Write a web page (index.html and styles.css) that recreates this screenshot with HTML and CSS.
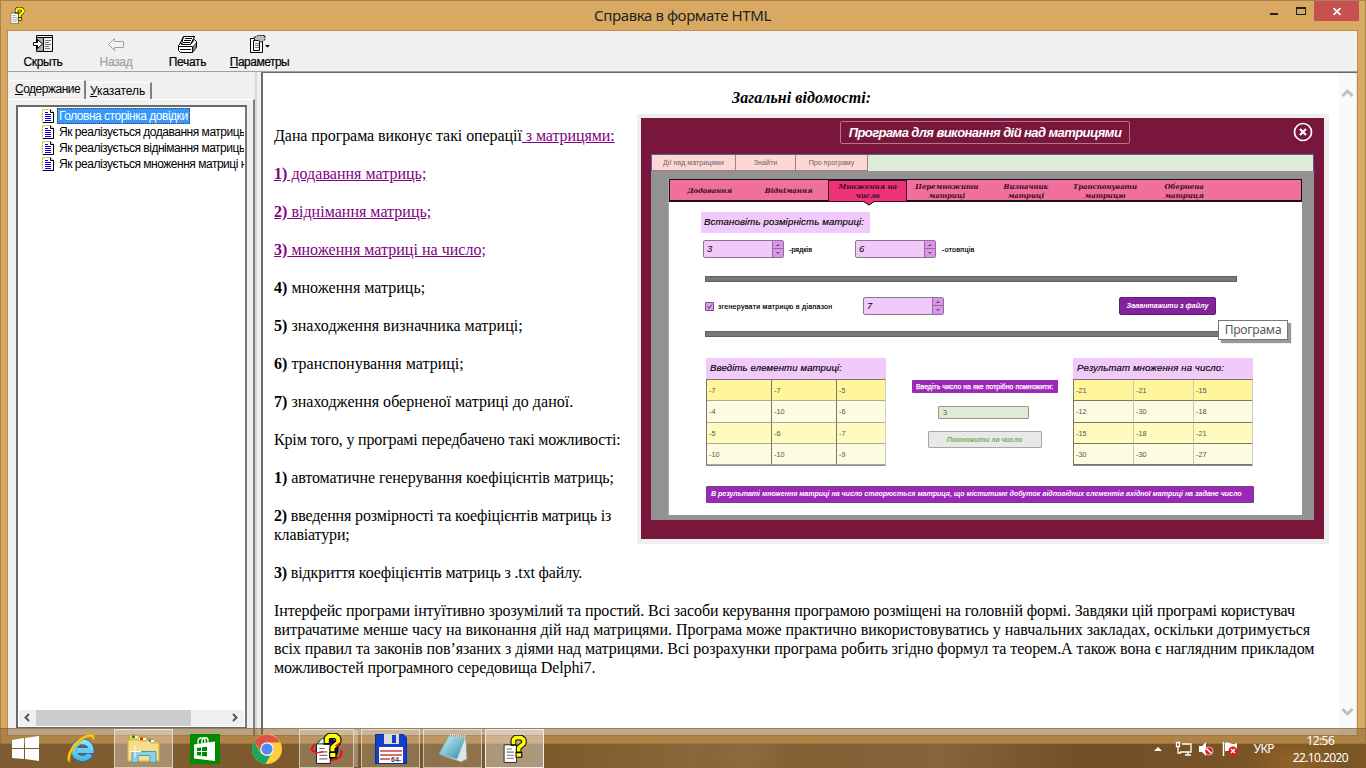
FILE: index.html
```html
<!DOCTYPE html>
<html lang="uk">
<head>
<meta charset="utf-8">
<title>Справка в формате HTML</title>
<link rel="stylesheet" href="styles.css">
</head>
<body>
<svg class="defs" width="0" height="0">
  <symbol id="help" viewBox="0 0 22 27">
    <path d="M.5 9.500h12v17H.5z" fill="#fff" stroke="#111" stroke-width=".8"/>
    <path d="M3 13.500h5M3 16.500h7M3 19.500h7M3 22.500h7" stroke="#777"/>
    <g fill="none" stroke-linejoin="bevel"><path d="M9.500 7.500V4.500L11.500 2.500H17L19.500 4.500V8L14.500 12.500V14.500" stroke="#000" stroke-width="5.500" stroke-linecap="square"/><path d="M9.500 7V4.500L11.500 2.500H17L19.500 4.500V8L14.500 12.500V14" stroke="#ff0" stroke-width="3.600" stroke-linecap="square"/></g>
    <path d="M12 17h5.500v4.500H12z" fill="#ff0" stroke="#000"/>
  </symbol>
  <symbol id="page" viewBox="0 0 12 14">
    <path d="M.5.5h8l3 3v10H.5z" fill="#fff" stroke="#999"/>
    <path d="M.5 13V.5H8" fill="none" stroke="#ee3" stroke-dasharray="2 1"/>
    <path d="M8.500.5v3h3v10H1" fill="none" stroke="#000"/>
    <path d="M3 3.500h3M3 5.500h6M3 7.500h6M3 9.500h6M3 11.500h6" stroke="#00f"/>
  </symbol>
</svg>
<div class="desktop">
  <div class="window">
    <header class="titlebar">
      <svg class="title-icon" width="15" height="17" viewBox="0 0 22 27"><use href="#help"/></svg>
      <span class="title">Справка в формате HTML</span>
      <div class="controls">
        <i class="min"></i><i class="max"></i>
        <span class="close"><svg width="8" height="7" viewBox="0 0 8 7"><path d="M.5 0l7 7M7.500 0l-7 7" stroke="#fff" stroke-width="1.700"/></svg></span>
      </div>
    </header>
    <div class="client">
      <nav class="toolbar">
        <div class="tool t1"><svg width="20" height="18" viewBox="0 0 20 18"><path d="M3.500.5h16v16h-16z" fill="#eee" stroke="#000"/><path d="M4 2.500h15" stroke="#000"/><path d="M4 3h6v13H4z" fill="#aaa"/><path d="M10.500 3v13" stroke="#000"/><path d="M12 5.500h6M12 7.500h4M12 9.500h6M12 11.500h4M12 13.500h5" stroke="#777"/><path d="M.5 7.500h4v-3l5 4.500-5 4.500v-3h-4z" fill="#fff" stroke="#000"/><path d="M3 17h1" stroke="#0f0"/></svg><span>Скрыть</span></div>
        <div class="tool t2 off"><svg width="18" height="18" viewBox="0 0 18 18"><path d="M1.500 9.500l6-6v3h9v6h-9v3z" fill="#f4f4f4" stroke="#a0a0a0"/></svg><span>Назад</span></div>
        <div class="tool t3"><svg width="21" height="18" viewBox="0 0 21 18"><path d="M6.500 1.500h11l-4 8h-11z" fill="#fff" stroke="#000"/><path d="M8 3.500h7M7 5.500h7M6 7.500h7" stroke="#000"/><path d="M1.500 10.500l2-2h11l3-4 2 2v6l-4 5h-12l-2-2z" fill="#fff" stroke="#000"/><path d="M6.500 1.500h11l-4 8h-9z" fill="#fff" stroke="#000"/><path d="M8 3.500h7M7 5.500h7M6 7.500h7M1 11.500h14.500v6M3 14.500h11" fill="none" stroke="#000"/><path d="M16 11l3-4v6l-3 3z" fill="#777"/></svg><span>Печать</span></div>
        <div class="tool t4"><svg width="21" height="18" viewBox="0 0 21 18"><path d="M1.500 3.500h12v14h-12z" fill="#fff" stroke="#000"/><path d="M4.500 5.500h6v10h-6z" fill="#fff" stroke="#000"/><path d="M6 8.500h4M6 10.500h4M6 12.500h4" stroke="#777"/><path d="M5 2.500l4-2h7v4l-4 3-2-2H6z" fill="#bbb" stroke="#000" stroke-dasharray="2 1"/><path d="M16 10h5l-2.500 2.500z"/></svg><span><u>П</u>араметры</span></div>
      </nav>
      <div class="panes">
        <aside class="side">
          <div class="tabs"><span class="tab on"><u>С</u>одержание</span><span class="tab two"><u>У</u>казатель</span></div>
          <div class="tabbody">
            <div class="tree">
              <div class="node sel"><svg width="12" height="14"><use href="#page"/></svg><span>Головна сторінка довідки</span></div>
              <div class="node"><svg width="12" height="14"><use href="#page"/></svg><span>Як реалізується додавання матриць</span></div>
              <div class="node"><svg width="12" height="14"><use href="#page"/></svg><span>Як реалізується віднімання матриць</span></div>
              <div class="node"><svg width="12" height="14"><use href="#page"/></svg><span>Як реалізується множення матриці н</span></div>
              <div class="hscroll"><svg width="17" height="15"><path d="M10 4L6.500 7.500 10 11" class="chev"/></svg><i></i><svg width="17" height="15"><path d="M6 4l3.500 3.500L6 11" class="chev"/></svg></div>
            </div>
          </div>
        </aside>
        <div class="splitter"></div>
        <main class="doc">
          <article class="article">
            <h1>Загальні відомості:</h1>
            <figure class="shot">
              <div class="app">
                <div class="app-head"><b>Програма для виконання дій над матрицями</b>
                  <svg class="app-close" width="20" height="20" viewBox="0 0 20 20" fill="none" stroke="#fff"><circle cx="10" cy="10" r="8.500" stroke-width="1.700"/><path d="M7 7l6 6M13 7l-6 6" stroke-width="2.200"/></svg></div>
                <div class="app-menu"><span>Дії над матрицями</span><span>Знайти</span><span>Про програму</span></div>
                <div class="frame"><div class="panel">
                  <div class="ops"><span>Додавання</span><span>Віднімання</span><span class="act">Множення на<br>число<svg width="14" height="5"><path d="M1 0l6 4 6-4" fill="#ec3378" stroke="#000"/></svg></span><span>Перемножити<br>матриці</span><span>Визначник<br>матриці</span><span>Транспонувати<br>матрицю</span><span>Обернена<br>матриця</span></div>
                  <div class="size-title">Встановіть розмірність матриці:</div>
                  <div class="sizes"><div class="spin">3<i></i></div><b>-рядків</b><div class="spin s2">6<i></i></div><b>-отовпців</b></div>
                  <div class="rule"></div>
                  <div class="gen"><svg width="9" height="9" viewBox="0 0 9 9"><path d="M.5.5h8v8h-8z" fill="#dc9de8" stroke="#765080"/><path d="M2.500 4.500l1.500 2 3-4" fill="none" stroke="#503058"/></svg><b>згенерувати матрицю в діапазон</b><div class="spin">7<i></i></div><span class="load">Завантажити з файлу</span></div>
                  <div class="rule"></div>
                  <div class="work">
                    <div class="matrix m1"><h2>Введіть елементи матриці:</h2><div class="cells"><span>-7</span><span>-7</span><span>-5</span><span>-4</span><span>-10</span><span>-6</span><span>-5</span><span>-6</span><span>-7</span><span>-10</span><span>-10</span><span>-9</span></div></div>
                    <div class="mid"><span class="ask">Введіть число на яке потрібно помножити:</span><span class="num">3</span><span class="mul">Помножити на число</span></div>
                    <div class="matrix m2"><h2>Результат множення на число:</h2><div class="cells"><span>-21</span><span>-21</span><span>-15</span><span>-12</span><span>-30</span><span>-18</span><span>-15</span><span>-18</span><span>-21</span><span>-30</span><span>-30</span><span>-27</span></div></div>
                  </div>
                  <div class="note"><span>В результаті множення матриці на число створюється матриця, що міститиме добуток відповідних елементів вхідної матриці на задане число</span></div>
                </div></div>
              </div>
              <span class="tooltip">Програма</span>
            </figure>
            <p class="snug">Дана програма виконує такі операції<a> з матрицями:</a></p>
            <p><a><b>1)</b> додавання матриць;</a></p>
            <p><a><b>2)</b> віднімання матриць;</a></p>
            <p><a><b>3)</b> множення матриці на число;</a></p>
            <p><b>4)</b> множення матриць;</p>
            <p><b>5)</b> знаходження визначника матриці;</p>
            <p><b>6)</b> транспонування матриці;</p>
            <p><b>7)</b> знаходження оберненої матриці до даної.</p>
            <p class="tight">Крім того, у програмі передбачено такі можливості:</p>
            <p class="snug"><b>1)</b> автоматичне генерування коефіцієнтів матриць;</p>
            <p class="tight"><b>2)</b> введення розмірності та коефіцієнтів матриць із<br>клавіатури;</p>
            <p class="tight"><b>3)</b> відкриття коефіцієнтів матриць з .txt файлу.</p>
            <p class="long"><span class="l1">Інтерфейс програми інтуїтивно зрозумілий та простий. Всі засоби керування програмою розміщені на головній формі. Завдяки цій програмі користувач</span><br><span class="l2">витрачатиме менше часу на виконання дій над матрицями. Програма може практично використовуватись у навчальних закладах, оскільки дотримується</span><br><span class="l3">всіх правил та законів пов’язаних з діями над матрицями. Всі розрахунки програма робить згідно формул та теорем.А також вона є наглядним прикладом</span><br><span class="l4">можливостей програмного середовища Delphi7.</span></p>
          </article>
          <div class="vscroll"><svg width="17" height="17"><path d="M3.500 11L8.500 6l5 5" /></svg><svg width="17" height="17"><path d="M3.500 6l5 5 5-5"/></svg></div>
        </main>
      </div>
    </div>
  </div>
  <footer class="taskbar">
    <svg class="ic start" width="27" height="26" viewBox="0 0 27 26" fill="#fff"><path d="M0 4l12-2v10H0zM13 2l14-2v12H13zM0 13h12v10L0 22zM13 13h14v12l-14-2z"/></svg>
    <svg class="ic ie" width="30" height="31" viewBox="0 0 30 31"><defs><linearGradient id="ieb" x2="0" y2="1"><stop stop-color="#8be4fb"/><stop offset="1" stop-color="#4cb9ec"/></linearGradient></defs><path d="M24.500 21.500C20 28.500 8 26.500 8 17C8 6 25 6 25 17.500H11" fill="none" stroke="#1576ae" stroke-width="6.500"/><path d="M24 21.500C20 28 8 26.500 8 17C8 6 25 6 25 17.500H11" fill="none" stroke="url(#ieb)" stroke-width="5"/><path d="M4 30C-4 25 9 4 23 1c6-1 7 3 4 7 0-5-4-5-9-2C9 12 3 21 4 30z" fill="#fdc513" stroke="#c08407" stroke-width=".5"/></svg>
    <div class="task explorer"><svg width="34" height="30" viewBox="0 0 34 30"><path d="M2 4V1h9l2 2h6v2h6v2h7v17H2z" fill="#e9c95c" stroke="#bd9a38"/><path d="M5 2h5v2H5zM12 4h7v2h-7zM20 6h7v2h-7z" fill="#fff"/><path d="M5 1.500h3v2.500H5z" fill="#0a9a23"/><path d="M13 3.500h3v2.500h-3z" fill="#d23519"/><path d="M21 5.500h3v2.500h-3z" fill="#1784d8"/><path d="M1 6h10l2 1h9l2 2h8v18H1z" fill="#f6df86" stroke="#d2b352"/><path d="M5 28.500V17.500h24v11h-6v-7H11v7z" fill="#8ecfe6" stroke="#4a9cbd"/><path d="M8 12v11M3 17.500h11" stroke="#fff"/></svg></div>
    <svg class="ic store" width="30" height="30" viewBox="0 0 30 30"><path d="M0 0h30v30H0z" fill="#008a00"/><path d="M4 10.500l21-3v19.500L4 24.500z" fill="#fff"/><path d="M8 11V7c0-4 7-4 7 0v3M12 10V6c0-3 6-3 6 0v3" fill="none" stroke="#fff" stroke-width="1.300"/><path d="M7 14l4-.5V17H7zM12 13.300l5-.6V17h-5zM7 18h4v3.700L7 21.200zM12 18h5v4.500l-5-.6z" fill="#008a00"/></svg>
    <svg class="ic chrome" width="30" height="30" viewBox="0 0 30 30"><circle cx="15" cy="15" r="15" fill="#ffcd40"/><path d="M2 7.500A15 15 0 0 1 28 8.500H15L9 18z" fill="#de5347"/><path d="M2 7.500L8.500 18.700Q12 22.500 18 22L13.500 30A15 15 0 0 1 2 7.500z" fill="#1da462"/><circle cx="15" cy="15" r="6.800" fill="#eef"/><circle cx="15" cy="15" r="5.500" fill="#4c8bf5"/></svg>
    <div class="task multi"><svg width="34" height="31" viewBox="0 0 34 31"><circle cx="17" cy="16" r="11" fill="#07109a" stroke="#000"/><path d="M7 13Q8 5 15 5l4 5-5 3 3 5-3 5-8-1z" fill="#188b2e"/><path d="M7 12l5-6 5 1-4 5z" fill="#e5f1ff"/><path d="M5 11Q-2 18 6 19M8 28q27 1 23-11" fill="none" stroke="#f01" stroke-width="1.800"/><svg x="5" y="0" width="27" height="31"><use href="#help"/></svg><path d="M5 20q12 0 26-11" fill="none" stroke="#f12" stroke-width="1.500" stroke-dasharray="9 13"/></svg></div>
    <div class="task"><svg width="32" height="32" viewBox="0 0 32 32"><path d="M.5 1.500h28l3 3v26H.5z" fill="#153fc9" stroke="#102c95"/><path d="M9 1h15v10H9z" fill="#ddd"/><path d="M17 2h4v8h-4z" fill="#153fc9"/><path d="M4 14h24v16H4z" fill="#fff"/><path d="M5 18h22M5 22h22M5 26h10" stroke="#d23a44" stroke-width="1.300"/><text x="16" y="29" font-family="Liberation Sans" font-size="7" font-weight="700" fill="#444">64-</text></svg></div>
    <div class="task"><svg width="32" height="31" viewBox="0 0 32 31"><defs><linearGradient id="pad" x2="1" y2="1"><stop stop-color="#d6f5fa"/><stop offset="1" stop-color="#288da6"/></linearGradient></defs><path d="M12 3l17 2 1 21-6 3-20-7z" fill="#dce6e8" stroke="#a69977"/><path d="M12 3l16 2-8 21L2 21z" fill="url(#pad)" stroke="#80afb8" stroke-width=".6"/><path d="M13 2l16 2" stroke="#cde" stroke-width="3" stroke-dasharray="1 1"/></svg></div>
    <div class="task current"><svg width="24" height="28"><use href="#help"/></svg></div>
    <div class="tray">
      <svg width="97" height="18" viewBox="0 0 97 18"><path d="M1 11l4-4 4 4z" fill="#fff"/><g fill="none" stroke="#fff" stroke-width="1.300"><path d="M29 4h9v8H27M32 15h6M35 12v3M23.500 2.500h3v4h-3zM25 7v6h3"/></g><path d="M46 6h3l4-4v14l-4-4h-3z" fill="#fff"/><circle cx="56" cy="11" r="4" fill="#e31721" stroke="#fff" stroke-width=".6"/><path d="M53.500 8.500l5 5" stroke="#fff" stroke-width="1.500"/><path d="M70.500 2v14" stroke="#fff" stroke-width="1.500"/><path d="M72 3c5-2 6 3 12 0v8H72z" fill="#fff"/><circle cx="80" cy="11" r="4.500" fill="#e31721"/><path d="M78 9l4 4M82 9l-4 4" stroke="#fff" stroke-width="1.500"/></svg>
      <span class="lang">УКР</span>
      <div class="clock"><span>12:56</span><span>22.10.2020</span></div>
    </div>
  </footer>
</div>
</body>
</html>
```
FILE: styles.css
```css
* { box-sizing: border-box; }
body { margin: 0; overflow: hidden; }
.defs { position: absolute; }
.desktop { position: relative; width: 1366px; height: 768px; background: radial-gradient(ellipse 50px 26px at 1292px 762px, #9a5f18, transparent), radial-gradient(ellipse 40px 30px at 745px 756px, #8d7552, transparent), linear-gradient(95deg, #654a32 0, #70522e 15%, #554024 35%, #674b22 43%, #856747 53%, #725936 61%, #7d624b 70%, #4b321a 80%, #654317 100%); font-family: "Liberation Sans", sans-serif; color: #000; white-space: nowrap; }
.window { height: 744px; background: #d9a962; border: 1px solid #a98451; padding: 0 7px 7px 6px; display: flex; flex-direction: column; }
.titlebar { height: 29px; display: flex; align-items: center; position: relative; justify-content: center; }
.title-icon { position: absolute; left: 3px; top: 6px; }
.title { font: 15px/29px "Noto Sans", sans-serif; letter-spacing: -0.4px; color: #222; }
.controls { position: absolute; right: -1px; top: 0; display: flex; align-items: flex-start; }
.min { width: 8px; height: 2px; background: #222; margin: 12px 18px 0 0; }
.max { width: 10px; height: 8px; border: 1px solid #222; border-top-width: 2px; margin: 6px 8px 0 0; }
.close { width: 45px; height: 20px; background: #c75050; display: grid; place-items: center; }
.client { flex: 1; min-height: 0; display: flex; flex-direction: column; background: #f0f0f0; border: 1px solid #b98e4f; }
.toolbar { height: 40px; display: flex; position: relative; }
.tool { display: flex; flex-direction: column; align-items: center; padding-top: 4px; font-size: 12px; line-height: 15px; gap: 2px; letter-spacing: -0.3px; }
.tool span { -webkit-text-stroke: .2px; }
.t1 { width: 70px; } .t2 { width: 76px; } .t3 { width: 67px; } .t4 { width: 77px; letter-spacing: -0.5px; }
.off { color: #a0a0a0; }
.panes { flex: 1; min-height: 0; display: flex; border-top: 1px solid #a0a0a0; }
.side { width: 247px; padding: 9px 0 0 1px; display: flex; flex-direction: column; }
.tabs { display: flex; height: 18px; align-items: flex-end; font-size: 12px; letter-spacing: -0.5px; }
.tab { height: 17px; line-height: 17px; padding: 0 5px 0 4px; border-top: 1px solid #fff; border-right: 2px solid #808080; width: 66px; }
.tab.on { height: 19px; width: 77px; padding-left: 6px; line-height: 16px; }
.tab.two { letter-spacing: -0.1px; }
.tabbody { flex: 1; border-top: 1px solid #fff; border-right: 2px solid #808080; padding: 5px 6px 8px 7px; }
.tree { height: 623px; border: 2px solid #696969; border-right-color: #777; border-bottom-width: 1px; background: #fff; overflow: hidden; padding: 1px; display: flex; flex-direction: column; }
.node { height: 16px; display: flex; align-items: center; padding-left: 23px; gap: 3px; font-size: 12px; letter-spacing: -0.48px; overflow: hidden; }
.node svg { flex: none; }
.node span { height: 16px; line-height: 16px; padding: 0 2px; }
.sel span { background: #3399ff; color: #fff; outline: 1px dotted #633; outline-offset: -1px; }
.hscroll { height: 16px; margin-top: auto; display: flex; justify-content: space-between; background: #f0f0f0; }
.hscroll i { width: 155px; background: #cdcdcd; margin: 0 auto 0 0; }
.chev { fill: none; stroke: #555; stroke-width: 2; }
.splitter { width: 8px; border-left: 2px solid #d8d8d8; border-right: 2px solid #696969; }
.doc { flex: 1; min-width: 0; background: #fff; border-top: 1px solid #696969; display: flex; }
.article { flex: 1; padding: 15px 10px 0 11px; font: 16px/19px "Liberation Serif", serif; }
.article h1 { margin: 0; font-size: 16px; font-style: italic; text-align: center; letter-spacing: .05px; }
.article p { margin: 19px 0 0; letter-spacing: 0.02px; }
.article .tight { letter-spacing: -0.16px; }
.article .snug { letter-spacing: -0.07px; }
.l1 { letter-spacing: -0.115px; }
.l2 { letter-spacing: -0.027px; }
.l3 { letter-spacing: -0.067px; }
.l4 { letter-spacing: -0.12px; }
.article a { color: #800080; text-decoration: underline; }
.vscroll { width: 18px; background: #f9f9f9; padding: 12px 0 15px; display: flex; flex-direction: column; justify-content: space-between; border-right: 1px solid #e3e3e3; }
.vscroll path { fill: none; stroke: #bfbfbf; stroke-width: 3; }
.shot { position: relative; float: right; width: 692px; height: 430px; margin: 7px 0 0; border: 4px solid #eee; background: #eee; font-family: "Liberation Sans", sans-serif; }
.app { width: 683px; height: 421px; background: #78163b; display: flex; flex-direction: column; padding: 0 10px; }
.app-head { height: 36px; display: flex; justify-content: center; position: relative; padding-top: 3px; }
.app-head b { width: 290px; height: 23px; border: 1px solid #b5738c; border-radius: 2px; color: #fff; font-size: 13px; line-height: 21px; font-style: italic; text-align: center; letter-spacing: -0.57px; margin-left: 5px; }
.app-close { position: absolute; right: 1px; top: 4px; }
.app-menu { height: 17px; display: flex; background: #deecd5; border: 1px solid #586197; border-bottom: 0; font-size: 7.100px; line-height: 16px; color: #666; text-align: center; }
.app-menu span { width: 72px; background: #fdd7d6; border-right: 1px solid #a77d7d; border-bottom: 1px solid #a77d7d; }
.app-menu span:nth-child(1) { width: 84px; } .app-menu span:nth-child(2) { width: 60px; }
.frame { height: 349px; background: #929292; padding: 8px 12px 4px 17px; }
.panel { height: 336px; background: #fff; border-left: 1px solid #aaa; }
.ops { height: 23px; display: flex; align-items: center; background: #f16f9c; border: 1px solid #200c14; border-bottom-width: 2px; font: italic bold 7px/9px "DejaVu Serif", "Liberation Serif", serif; text-align: center; color: #3a0b1e; padding-top: 1px; letter-spacing: -.05px; }
.ops span { width: 79.100px; }
.ops .act { height: 22px; background: #ec3378; border: 1px solid #420d24; position: relative; padding-top: 1px; }
.ops .act svg { position: absolute; left: 33px; top: 20px; }
.size-title { margin: 10px 0 0 32px; width: 169px; height: 21px; line-height: 20px; padding-left: 3px; background: #f1c9fb; font-size: 9.600px; font-style: italic; letter-spacing: .15px; -webkit-text-stroke: .15px; }
.sizes, .gen { display: flex; align-items: center; height: 18px; font-size: 7px; }
.sizes { margin: 7px 0 0 34px; }
.spin { width: 81px; height: 18px; border: 1px solid #87758c; border-radius: 2px; background: #f1c9fb; padding-left: 3px; font: italic 9.500px/16px "Liberation Sans", sans-serif; display: flex; justify-content: space-between; flex: none; }
.spin i { width: 11px; background: linear-gradient(#87758c 0 0) 0 7px / 100% 1px no-repeat, #de91ef; border-left: 1px solid #87758c; display: flex; flex-direction: column; align-items: center; justify-content: space-around; }
.spin i::before, .spin i::after { content: ""; border: 2px solid transparent; border-top-width: 0; border-bottom: 2px solid #555; }
.spin i::after { transform: scaleY(-1); }
.sizes b { width: 71px; padding-left: 5px; font-weight: 400; -webkit-text-stroke: .2px; letter-spacing: .1px; }
.sizes b:last-child { padding-left: 6px; letter-spacing: .3px; }
.rule { width: 532px; height: 6px; margin: 18px 0 0 36px; background: #777; border: 1px solid #606060; }
.gen { margin: 15px 0 0 36px; }
.gen b { width: 145px; margin-left: 4px; font-weight: 400; -webkit-text-stroke: .2px; letter-spacing: .3px; }
.load { width: 97px; height: 18px; margin-left: 175px; background: #83229b; border: 1px solid #5b216a; border-radius: 2px; color: #fff; font-size: 7.100px; font-style: italic; font-weight: 700; line-height: 16px; text-align: center; }
.gen + .rule { margin-top: 16px; }
.work { display: flex; margin: 21px 0 0 37px; height: 107px; }
.matrix { width: 180px; }
.matrix h2 { margin: 0; height: 21px; background: #f1c9fb; font-size: 9.600px; line-height: 20px; font-weight: 400; font-style: italic; padding-left: 4px; letter-spacing: .12px; -webkit-text-stroke: .15px; }
.cells { display: grid; grid-template-columns: 65px 65px 48px; grid-auto-rows: 21.300px; font-size: 7.300px; line-height: 21px; color: #555; border: 1px solid #77776a; border-right-color: #ccc; border-bottom-color: #888; }
.m2 .cells { grid-template-columns: 60px 60px 58px; }
.cells span { padding-left: 2px; background: #fdfbe0; border-right: 1px solid #77776a; border-bottom: 1px solid #aaa99b; }
.cells span:nth-child(3n) { border-right: 0; }
.cells span:nth-child(-n+3) { background: #fff59b; }
.cells span:nth-child(n+7):nth-child(-n+9) { background: #fffabd; }
.m2 .cells span { border-right-color: #ccc9b2; border-bottom-color: #77776a; }
.mid { width: 187px; display: flex; flex-direction: column; align-items: center; padding: 22px 0 0; }
.mid span { border-radius: 1px; }
.ask { width: 146px; height: 13px; line-height: 13px; margin-left: 10px; background: #9c27b8; color: #fff; font-size: 6.900px; text-align: center; -webkit-text-stroke: .25px; letter-spacing: .04px; }
.num { width: 91px; height: 13px; margin: 13px 0 0 8px; background: #deecd5; border: 1px solid #8c988c; font-size: 7.300px; line-height: 12px; padding-left: 4px; color: #555; }
.mul { width: 114px; height: 17px; margin: 12px 0 0 10px; background: #e8e8e8; border: 1px solid #a6a6a6; color: #6db45e; font-size: 7px; line-height: 15px; text-align: center; font-weight: 700; font-style: italic; }
.note { width: 548px; height: 17px; margin: 21px 0 0 37px; background: #9c27b8; border: 1px solid #70427c; border-radius: 1px; color: #fff; font-size: 7.100px; line-height: 15px; font-weight: 700; font-style: italic; padding-left: 4px; letter-spacing: -.05px; }
.tooltip { position: absolute; left: 577px; top: 202px; width: 70px; height: 20px; background: #fff; border: 1px solid #777; color: #575757; font: 12px/18px "Noto Sans", sans-serif; text-align: center; box-shadow: 3px 3px 1px rgba(0,0,0,.4); letter-spacing: -.2px; }
.taskbar { position: absolute; left: 0; right: 0; bottom: 0; height: 40px; background: rgba(142,102,49,.57); border-top: 1px solid rgba(110,90,55,.5); display: flex; align-items: center; padding-left: 12px; color: #fff; }
.ic { flex: none; }
.ie { margin-left: 27px; }
.task { width: 59px; height: 39px; border: 1px solid rgba(255,255,255,.55); background: rgba(255,255,255,.17); display: grid; place-items: center; margin-right: 3px; }
.task.explorer { margin: 0 17px 0 18px; background: rgba(255,255,255,.3); }
.chrome { margin: 0 17px 0 32px; }
.task.multi { box-shadow: 5px 0 0 -1px rgba(255,255,255,.3); width: 55px; margin-right: 7px; }
.task.current { background: rgba(255,255,255,.38); border-color: #eee; }
.tray { margin-left: auto; display: flex; align-items: center; font: 12px/17px "Noto Sans", sans-serif; padding-right: 18px; }
.lang { margin-left: 4px; width: 22px; letter-spacing: -0.6px; }
.clock { display: flex; flex-direction: column; align-items: center; margin-left: 17px; letter-spacing: -0.6px; }
```
